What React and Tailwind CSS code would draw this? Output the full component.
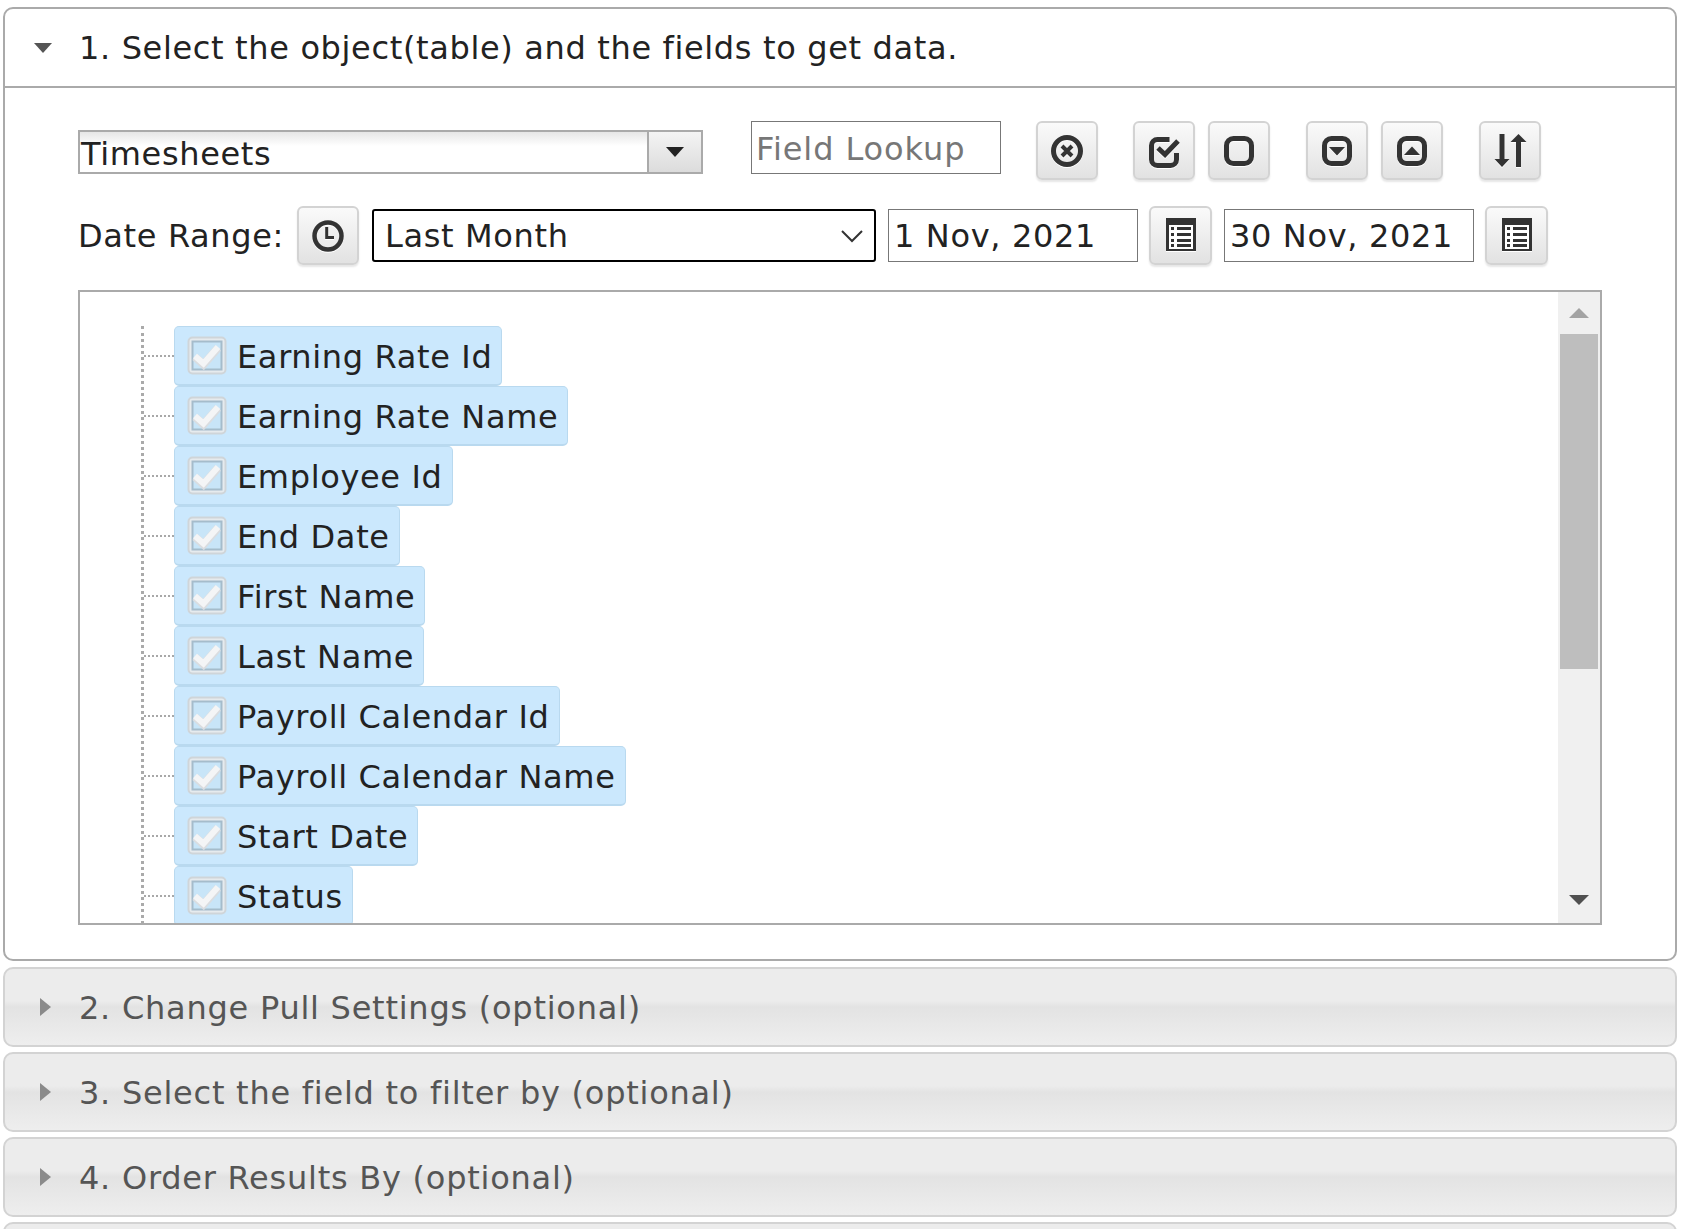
import { useState } from "react";

const fields = [
  "Earning Rate Id",
  "Earning Rate Name",
  "Employee Id",
  "End Date",
  "First Name",
  "Last Name",
  "Payroll Calendar Id",
  "Payroll Calendar Name",
  "Start Date",
  "Status",
];

const ToolButton = ({ className = "", children }) => (
  <button
    type="button"
    className={`flex h-[59px] w-[62px] shrink-0 items-center justify-center rounded-[6px] border-2 border-[#d3d3d3] bg-gradient-to-b from-[#fafafa] to-[#e2e2e2] shadow-[0_2px_2px_rgba(0,0,0,0.1)] ${className}`}
  >
    {children}
  </button>
);

const Icon = ({ children }) => (
  <svg
    width="36"
    height="36"
    viewBox="0 0 36 36"
    fill="none"
    stroke="#333"
    strokeWidth="5"
    className="drop-shadow-[0_1px_0_#fff]"
  >
    {children}
  </svg>
);

const CalendarIcon = () => (
  <svg width="30" height="36" viewBox="0 0 30 36" className="drop-shadow-[0_1px_0_#fff]">
    <rect x="0" y="0" width="30" height="33" fill="#333" />
    <rect x="3" y="7" width="24" height="24" fill="#fff" />
    <g fill="#333">
      <rect x="5" y="9" width="3" height="3" />
      <rect x="11" y="9" width="14" height="3" />
      <rect x="5" y="15" width="3" height="3" />
      <rect x="11" y="15" width="14" height="3" />
      <rect x="5" y="21" width="3" height="3" />
      <rect x="11" y="21" width="14" height="3" />
      <rect x="5" y="26" width="3" height="3" />
      <rect x="11" y="26" width="14" height="3" />
    </g>
  </svg>
);

const CheckIcon = () => (
  <svg width="40" height="39" viewBox="0 0 40 39" className="shrink-0">
    <rect x="1.5" y="1.5" width="37" height="36" rx="4" fill="#e6ebee" stroke="#cfd5d9" strokeWidth="2" />
    <rect x="5.5" y="5.5" width="29" height="28" fill="#c8e5f8" stroke="#a5bccb" strokeWidth="2" />
    <path d="M8 21l8.5 7.5L31 12" fill="none" stroke="#dadde0" strokeWidth="8" />
    <path d="M8 20l8.5 7.5L31 11" fill="none" stroke="#f4f5f6" strokeWidth="6" />
  </svg>
);

const TreeRow = ({ label }) => (
  <li className="flex h-[60px] items-center">
    <div className="w-[30px] border-t-2 border-dotted border-[#a8a8a8]" />
    <div className="flex h-[60px] items-center rounded-[5px] border border-b-2 border-[#b9d9ef] bg-[#cbe8fd] pl-[12px] pr-[9px]">
      <CheckIcon />
      <span className="ml-[10px] pt-[2px] text-[#222]">{label}</span>
    </div>
  </li>
);

const ClosedPanel = ({ title, className = "" }) => (
  <div
    className={`ml-[3px] mr-[6px] flex h-[80px] shrink-0 items-center rounded-[10px] border-2 border-[#d3d3d3] bg-[linear-gradient(#ececec_0%,#ececec_42%,#e3e3e3_50%,#eeeeee_100%)] pl-[35px] ${className}`}
  >
    <svg width="11" height="18" viewBox="0 0 11 18">
      <path d="M0 0l11 9L0 18z" fill="#8a8a8a" />
    </svg>
    <span className="ml-[28px] pt-[1px] tracking-[0.75px] text-[#555]">{title}</span>
  </div>
);

const App = () => {
  const [range] = useState("Last Month");

  return (
    <div className="flex h-[1229px] flex-col overflow-hidden bg-white pt-[7px] font-['DejaVu_Sans',sans-serif] text-[32px] leading-none tracking-[0.65px] text-[#222]">
      <div className="ml-[3px] mr-[6px] h-[954px] shrink-0 rounded-[10px] border-2 border-[#aaa] bg-white">
        <div className="flex h-[79px] items-center border-b-2 border-[#aaa] pl-[29px]">
          <svg width="18" height="10" viewBox="0 0 18 10">
            <path d="M0 0h18L9 10z" fill="#555" />
          </svg>
          <span className="ml-[27px] pt-[1px]">1. Select the object(table) and the fields to get data.</span>
        </div>

        <div className="pl-[73px] pr-[71px] pt-[33px]">
          <div className="flex h-[59px] items-start">
            <div className="mt-[9px] flex h-[44px] w-[625px] items-stretch border-2 border-[#aaa] bg-[linear-gradient(#e6e6e6,#ffffff_35%)]">
              <span className="flex-1 pl-[1px] pt-[6px]">Timesheets</span>
              <span className="flex w-[54px] items-center justify-center border-l-2 border-[#aaa] bg-gradient-to-b from-[#f4f4f4] to-[#dcdcdc]">
                <svg width="18" height="10" viewBox="0 0 18 10">
                  <path d="M0 0h18L9 10z" fill="#222" />
                </svg>
              </span>
            </div>
            <input
              placeholder="Field Lookup"
              className="ml-[48px] h-[53px] w-[250px] border border-[#777] px-[4px] pt-[2px] text-[32px] tracking-[0.9px] placeholder:text-[#777]"
            />
            <ToolButton className="ml-[35px]">
              <Icon>
                <circle cx="18" cy="18" r="13.5" />
                <path d="M13 13l10 10M23 13L13 23" strokeWidth="4" />
              </Icon>
            </ToolButton>
            <ToolButton className="ml-[35px]">
              <Icon>
                <path d="M30.5 20v6.5a6 6 0 0 1-6 6h-13a6 6 0 0 1-6-6v-14a6 6 0 0 1 6-6h12" />
                <path d="M12 15l7 6.5L32 8" />
              </Icon>
            </ToolButton>
            <ToolButton className="ml-[13px]">
              <Icon>
                <rect x="5.5" y="5.5" width="25" height="25" rx="7" />
              </Icon>
            </ToolButton>
            <ToolButton className="ml-[36px]">
              <Icon>
                <rect x="5.5" y="5.5" width="25" height="25" rx="7" />
                <path d="M10 14h16l-8 8.5z" fill="#333" stroke="none" />
              </Icon>
            </ToolButton>
            <ToolButton className="ml-[13px]">
              <Icon>
                <rect x="5.5" y="5.5" width="25" height="25" rx="7" />
                <path d="M10 22h16l-8-8.5z" fill="#333" stroke="none" />
              </Icon>
            </ToolButton>
            <ToolButton className="ml-[36px]">
              <Icon>
                <path d="M10 1v26M26.5 9v25" />
                <path d="M2.5 26h15L10 34zM18.5 9h16L26.5 1z" fill="#333" stroke="none" />
              </Icon>
            </ToolButton>
          </div>

          <div className="mt-[26px] flex h-[59px] items-center">
            <span className="w-[219px]">Date Range:</span>
            <ToolButton>
              <Icon>
                <circle cx="18" cy="18" r="13.5" strokeWidth="4.5" />
                <path d="M16.7 9v10.5H24" strokeWidth="3" />
              </Icon>
            </ToolButton>
            <div className="ml-[13px] flex h-[53px] w-[504px] items-center justify-between rounded-[3px] border-2 border-black pl-[11px] pr-[10px]">
              <span>{range}</span>
              <svg width="24" height="14" viewBox="0 0 24 14" fill="none" stroke="#333" strokeWidth="2">
                <path d="M2 2l10 10L22 2" />
              </svg>
            </div>
            <div className="ml-[12px] flex h-[53px] w-[250px] items-center border border-[#777] px-[5px]">1 Nov, 2021</div>
            <ToolButton className="ml-[11px] w-[63px]">
              <CalendarIcon />
            </ToolButton>
            <div className="ml-[12px] flex h-[53px] w-[250px] items-center border border-[#777] px-[5px]">30 Nov, 2021</div>
            <ToolButton className="ml-[11px] w-[63px]">
              <CalendarIcon />
            </ToolButton>
          </div>

          <div className="mt-[25px] flex h-[635px] w-[1524px] overflow-hidden border-2 border-[#aaa]">
            <div className="flex-1 overflow-hidden pl-[61px] pt-[34px]">
              <ul className="border-l-[3px] border-dotted border-[#aaa] pb-[40px]">
                {fields.map(f => (
                  <TreeRow key={f} label={f} />
                ))}
              </ul>
            </div>
            <div className="flex w-[42px] flex-col items-center bg-[#f0f0f0] px-[2px]">
              <div className="flex h-[42px] items-center justify-center">
                <svg width="20" height="10" viewBox="0 0 20 10">
                  <path d="M0 10h20L10 0z" fill="#a3a3a3" />
                </svg>
              </div>
              <div className="h-[335px] w-full bg-[#bebebe]" />
              <div className="flex-1" />
              <div className="flex h-[46px] items-center justify-center">
                <svg width="20" height="10" viewBox="0 0 20 10">
                  <path d="M0 0h20L10 10z" fill="#505050" />
                </svg>
              </div>
            </div>
          </div>
        </div>
      </div>

      <ClosedPanel title="2. Change Pull Settings (optional)" className="mt-[6px]" />
      <ClosedPanel title="3. Select the field to filter by (optional)" className="mt-[5px]" />
      <ClosedPanel title="4. Order Results By (optional)" className="mt-[5px]" />
      <ClosedPanel title="" className="mt-[5px]" />
    </div>
  );
};

export default App;
